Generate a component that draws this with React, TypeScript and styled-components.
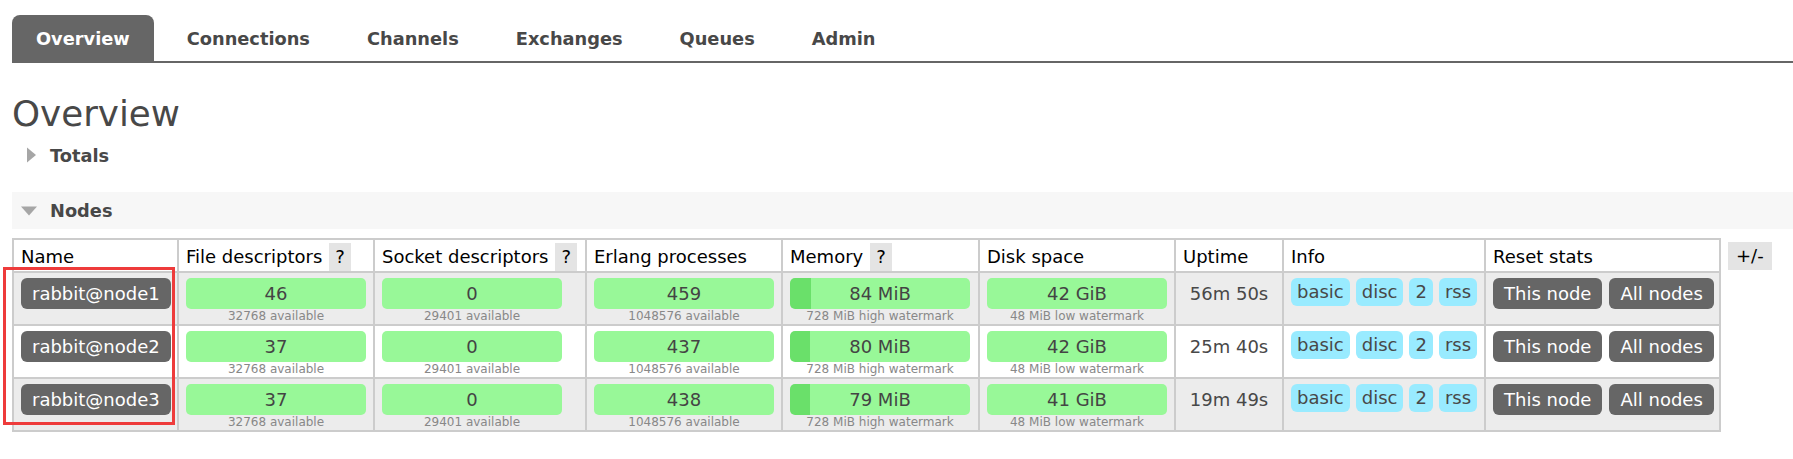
import styled, { createGlobalStyle } from 'styled-components';

const GlobalStyle = createGlobalStyle`
  body {
    margin: 0;
    background: #fff;
    font-family: "DejaVu Sans", Verdana, sans-serif;
    color: #484848;
  }
`;

const Page = styled.div`
  padding: 15px 0 0 12px;
`;

const TabBar = styled.ul`
  display: flex;
  gap: 9px;
  margin: 0;
  padding: 0;
  list-style: none;
  border-bottom: 2px solid #666;
`;

const Tab = styled.li<{ $active?: boolean }>`
  box-sizing: border-box;
  height: 46px;
  padding: 2px 24px 0;
  line-height: 44px;
  font-size: 17.8px;
  font-weight: bold;
  border-radius: 8px 8px 0 0;
  background: ${(p) => (p.$active ? '#666' : 'transparent')};
  color: ${(p) => (p.$active ? '#fff' : '#484848')};
`;

const Title = styled.h1`
  margin: 31px 0 0;
  font-size: 35.7px;
  font-weight: normal;
  line-height: 40px;
  color: #484848;
`;

const Toggle = styled.div<{ $shaded?: boolean }>`
  display: flex;
  align-items: center;
  gap: 13px;
  height: ${(p) => (p.$shaded ? 37 : 24)}px;
  margin-top: ${(p) => (p.$shaded ? 25 : 9)}px;
  padding-left: 9px;
  background: ${(p) => (p.$shaded ? '#f7f7f7' : 'transparent')};
  font-size: 17.8px;
  font-weight: bold;
`;

const TableArea = styled.div`
  position: relative;
  display: flex;
  align-items: flex-start;
  margin-top: 9px;
`;

const Table = styled.table`
  width: 1709px;
  table-layout: fixed;
  border-collapse: separate;
  border-spacing: 0;
  border-left: 2px solid #ccc;
  border-top: 2px solid #ccc;
  font-size: 18px;
`;

const Th = styled.th<{ $width: number }>`
  box-sizing: border-box;
  width: ${(p) => p.$width}px;
  padding: 3px 7px 0;
  line-height: 28px;
  text-align: left;
  font-weight: normal;
  color: #000;
  white-space: nowrap;
  vertical-align: top;
  background: #fff;
  border-right: 2px solid #ccc;
  border-bottom: 2px solid #ccc;
`;

const Td = styled.td<{ $shaded: boolean; $center?: boolean }>`
  box-sizing: border-box;
  padding: 5px 7px 1px;
  vertical-align: top;
  white-space: nowrap;
  text-align: ${(p) => (p.$center ? 'center' : 'left')};
  background: ${(p) => (p.$shaded ? '#ececec' : '#fff')};
  border-right: 2px solid #ccc;
  border-bottom: 2px solid #ccc;
`;

const Help = styled.span`
  display: inline-block;
  margin-left: 7px;
  padding: 0 6px;
  background: #e4e4e4;
  vertical-align: top;
`;

const NodeName = styled.span`
  display: inline-block;
  padding: 0 11px;
  line-height: 31px;
  border-radius: 6px;
  background: #666;
  color: #fff;
`;

const Bar = styled.div<{ $fill: number }>`
  width: 180px;
  height: 31px;
  line-height: 31px;
  border-radius: 5px;
  text-align: center;
  color: #444;
  background: ${(p) =>
    p.$fill > 0
      ? `linear-gradient(to right, #6ae06a ${p.$fill}%, #98f898 ${p.$fill}%)`
      : '#98f898'};
`;

const Sub = styled.div`
  width: 180px;
  text-align: center;
  font-size: 12px;
  line-height: 14px;
  color: #888;
`;

const Uptime = styled.div`
  line-height: 31px;
`;

const Tags = styled.div`
  display: flex;
  gap: 6px;
`;

const Tag = styled.span`
  padding: 0 6px;
  line-height: 28px;
  border-radius: 6px;
  background: #99ebff;
  color: #484848;
`;

const Buttons = styled.div`
  display: flex;
  gap: 7px;
`;

const Button = styled.span`
  padding: 0 11px;
  line-height: 31px;
  border-radius: 6px;
  background: #666;
  color: #fff;
`;

const PlusMinus = styled.span`
  margin: 4px 0 0 7px;
  padding: 0 8px;
  line-height: 28px;
  font-size: 18px;
  background: #e4e4e4;
  color: #000;
`;

const Highlight = styled.div`
  position: absolute;
  left: -9px;
  top: 29px;
  width: 172px;
  height: 158px;
  box-sizing: border-box;
  border: 3px solid #ee3b3b;
  pointer-events: none;
`;

const TriangleRight = () => (
  <svg width="16" height="16" viewBox="0 0 16 16">
    <polygon points="6,0.5 15,8 6,15.5" fill="#a6a6a6" />
  </svg>
);

const TriangleDown = () => (
  <svg width="16" height="16" viewBox="0 0 16 16">
    <polygon points="0,3.5 16,3.5 8,12.5" fill="#a6a6a6" />
  </svg>
);

const tabs = ['Overview', 'Connections', 'Channels', 'Exchanges', 'Queues', 'Admin'];

const columns: { title: string; width: number; help?: boolean }[] = [
  { title: 'Name', width: 165 },
  { title: 'File descriptors', width: 196, help: true },
  { title: 'Socket descriptors', width: 212, help: true },
  { title: 'Erlang processes', width: 196 },
  { title: 'Memory', width: 197, help: true },
  { title: 'Disk space', width: 196 },
  { title: 'Uptime', width: 108 },
  { title: 'Info', width: 202 },
  { title: 'Reset stats', width: 235 },
];

const nodes = [
  { name: 'rabbit@node1', fd: 46, procs: 459, mem: 84, disk: 42, uptime: '56m 50s' },
  { name: 'rabbit@node2', fd: 37, procs: 437, mem: 80, disk: 42, uptime: '25m 40s' },
  { name: 'rabbit@node3', fd: 37, procs: 438, mem: 79, disk: 41, uptime: '19m 49s' },
];

const MEM_WATERMARK = 728;

const App = () => (
  <Page>
    <GlobalStyle />
    <TabBar>
      {tabs.map((tab, i) => (
        <Tab key={tab} $active={i === 0}>{tab}</Tab>
      ))}
    </TabBar>
    <Title>Overview</Title>
    <Toggle>
      <TriangleRight />
      Totals
    </Toggle>
    <Toggle $shaded>
      <TriangleDown />
      Nodes
    </Toggle>
    <TableArea>
      <Table>
        <thead>
          <tr>
            {columns.map(({ title, width, help }) => (
              <Th key={title} $width={width}>
                {title}{help && <Help>?</Help>}
              </Th>
            ))}
          </tr>
        </thead>
        <tbody>
          {nodes.map((node, i) => {
            const shaded = i % 2 === 0;
            return (
              <tr key={node.name}>
                <Td $shaded={shaded}><NodeName>{node.name}</NodeName></Td>
                <Td $shaded={shaded}>
                  <Bar $fill={0}>{node.fd}</Bar>
                  <Sub>32768 available</Sub>
                </Td>
                <Td $shaded={shaded}>
                  <Bar $fill={0}>0</Bar>
                  <Sub>29401 available</Sub>
                </Td>
                <Td $shaded={shaded}>
                  <Bar $fill={0}>{node.procs}</Bar>
                  <Sub>1048576 available</Sub>
                </Td>
                <Td $shaded={shaded}>
                  <Bar $fill={(node.mem / MEM_WATERMARK) * 100}>{node.mem} MiB</Bar>
                  <Sub>728 MiB high watermark</Sub>
                </Td>
                <Td $shaded={shaded}>
                  <Bar $fill={0}>{node.disk} GiB</Bar>
                  <Sub>48 MiB low watermark</Sub>
                </Td>
                <Td $shaded={shaded} $center><Uptime>{node.uptime}</Uptime></Td>
                <Td $shaded={shaded}>
                  <Tags>
                    <Tag>basic</Tag>
                    <Tag>disc</Tag>
                    <Tag>2</Tag>
                    <Tag>rss</Tag>
                  </Tags>
                </Td>
                <Td $shaded={shaded}>
                  <Buttons>
                    <Button>This node</Button>
                    <Button>All nodes</Button>
                  </Buttons>
                </Td>
              </tr>
            );
          })}
        </tbody>
      </Table>
      <PlusMinus>+/-</PlusMinus>
      <Highlight />
    </TableArea>
  </Page>
);

export default App;
